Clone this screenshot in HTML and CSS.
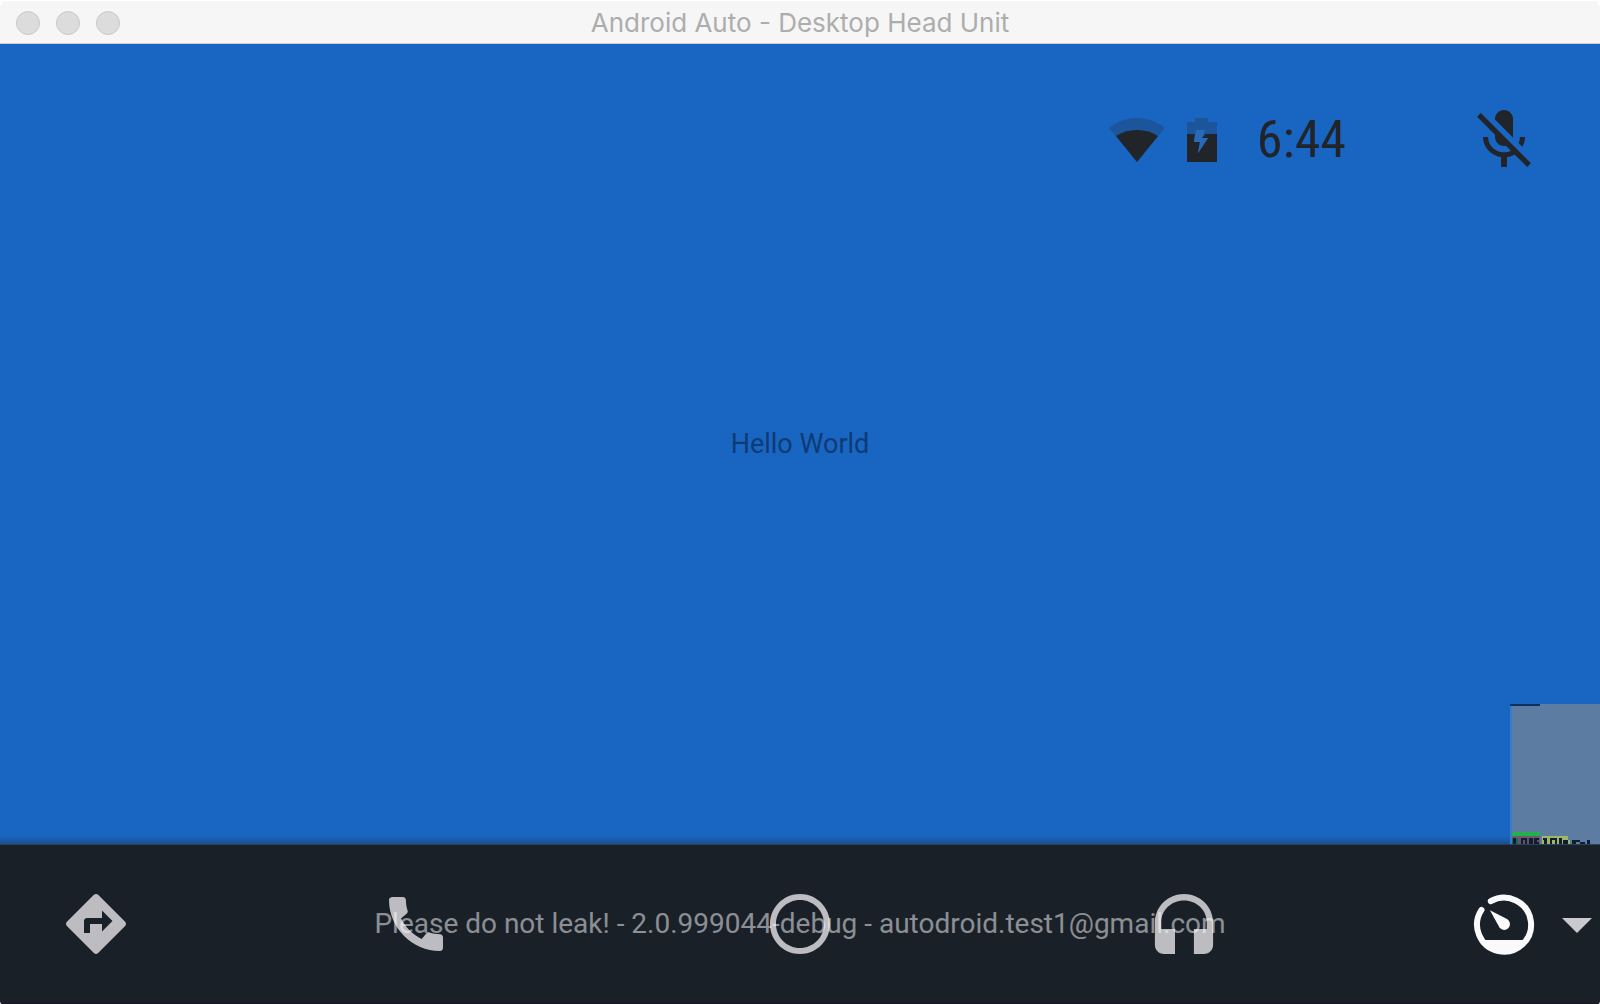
FILE: index.html
```html
<!DOCTYPE html>
<html lang="en">
<head>
<meta charset="utf-8">
<meta name="viewport" content="width=device-width, initial-scale=1">
<title>Android Auto - Desktop Head Unit</title>
<link rel="stylesheet" href="styles.css">
</head>
<body>
<div class="window">
  <header class="titlebar">
    <div class="lights">
      <button class="light" type="button" aria-label="Close"></button>
      <button class="light" type="button" aria-label="Minimize"></button>
      <button class="light" type="button" aria-label="Zoom"></button>
    </div>
    <h1 class="title">Android Auto - Desktop Head Unit</h1>
  </header>

  <main class="screen">
    <div class="status">
      <svg class="wifi" viewBox="0 0 56 44" aria-hidden="true">
        <path class="faint" d="M28 0C17 0 7 4 0 10L28 44 56 10C49 4 39 0 28 0z"/>
        <path d="M28 12C20 12 13 14 7 18L28 44 49 18C43 14 36 12 28 12z"/>
      </svg>
      <svg class="battery" viewBox="0 0 30 44" aria-hidden="true">
        <path class="faint" d="M8 0H21V4H30V16H0V4H8z"/>
        <path d="M0 16H8L7 24H13L11 35 21 20H15L18 16H30V44H0z"/>
        <path class="bolt" d="M9 12H18L15 20H21L11 35 13 24H7z"/>
      </svg>
      <time class="clock">6:44</time>
      <button class="mic" type="button" aria-label="Microphone off">
        <svg class="icon" viewBox="0 0 24 24" aria-hidden="true">
          <path d="M19 11h-1.700c0 .740-.160 1.430-.430 2.050l1.230 1.230c.560-.980.900-2.090.900-3.280zm-4.020.170c0-.060.020-.110.020-.170V5c0-1.660-1.340-3-3-3S9 3.340 9 5v.180l5.980 5.990zM4.270 3L3 4.270l6.010 6.010V11c0 1.660 1.330 3 2.990 3 .220 0 .440-.030.650-.080l1.660 1.660c-.710.330-1.500.520-2.310.520-2.760 0-5.300-2.100-5.300-5.100H5c0 3.410 2.720 6.230 6 6.720V21h2v-3.280c.910-.130 1.770-.450 2.540-.900L19.730 21 21 19.730 4.270 3z"/>
        </svg>
      </button>
    </div>
    <p class="hello">Hello World</p>
    <div class="graph" aria-hidden="true">
      <svg class="ticks" viewBox="0 0 90 14">
        <path fill="#22b14e" d="M2 2H30V6H2z"/>
        <path fill="#6b5b6d" d="M2 6H30V8H2z"/>
        <path fill="#176b50" d="M2 8H8V14H2z"/>
        <path fill="#67516a" d="M8 8H30V14H8z"/>
        <path fill="#9db765" d="M32 6H58V10H60V14H32z"/>
        <path fill="#101c30" d="M3 8H6V14H3zM11 8H17V14H15V10H13V14H11zM19 8H23V14H19zM24 8H29V10H27V12H29V14H24zM33 8H37V14H34V10H33zM40 8H47V14H45V10H42V14H40zM49 8H52V14H49zM53 10H58V14H53zM62 10H70V12H66V14H62zM70 12H75V14H70zM77 10H80V14H77z"/>
      </svg>
    </div>
  </main>

  <nav class="nav" aria-label="Facets">
    <button class="facet side" type="button" aria-label="Navigation">
      <svg class="icon" viewBox="0 0 24 24" aria-hidden="true"><path d="M21.710 11.290l-9-9c-.390-.390-1.020-.390-1.410 0l-9 9c-.390.390-.390 1.020 0 1.410l9 9c.390.390 1.020.390 1.410 0l9-9c.390-.380.390-1.010 0-1.410zM14 14.500V12h-4v3H8v-4c0-.550.450-1 1-1h5V7.500l3.500 3.500-3.500 3.500z"/></svg>
    </button>
    <button class="facet wide" type="button" aria-label="Phone">
      <svg class="icon" viewBox="0 0 24 24" aria-hidden="true"><path d="M20.010 15.380c-1.230 0-2.420-.200-3.530-.560-.350-.120-.740-.030-1.010.240l-1.570 1.970c-2.830-1.350-5.480-3.900-6.890-6.830l1.950-1.660c.270-.280.350-.670.240-1.020-.370-1.110-.560-2.300-.560-3.530 0-.540-.450-.990-.990-.990H4.190C3.650 3 3 3.240 3 3.990 3 13.280 10.730 21 20.010 21c.710 0 .990-.630.990-1.180v-3.450c0-.540-.450-.990-.990-.990z"/></svg>
    </button>
    <button class="facet mid" type="button" aria-label="Home">
      <svg class="icon" viewBox="0 0 24 24" aria-hidden="true"><path d="M12 2C6.480 2 2 6.480 2 12s4.480 10 10 10 10-4.480 10-10S17.520 2 12 2zm0 18c-4.420 0-8-3.580-8-8s3.580-8 8-8 8 3.580 8 8-3.580 8-8 8z"/></svg>
    </button>
    <button class="facet wide" type="button" aria-label="Media">
      <svg class="icon" viewBox="0 0 24 24" aria-hidden="true"><path d="M12 2C6.700 2 2.300 6.200 2.300 11.500V19c0 1.660 1.340 3 3 3H9v-8.300H4.400V11.500C4.400 7.400 7.800 4.200 12 4.200s7.600 3.200 7.600 7.300v2.200H15.300V22h3.400c1.660 0 3-1.340 3-3v-7.500C21.700 6.200 17.300 2 12 2z"/></svg>
    </button>
    <button class="facet side active" type="button" aria-label="Car">
      <svg class="icon" viewBox="0 0 24 24" aria-hidden="true">
        <path class="ring" d="M7.600 4.400A9 9 0 1 1 4.500 7.300"/>
        <path d="M4.800 17.300H19.200C17.500 20 14.900 22 12 22S6.500 20 4.800 17.300z"/>
        <path d="M7.300 7.400L13 10.300C14 11 14.300 12.200 13.600 13.200S11.400 14.300 10.500 13.200z"/>
      </svg>
      <svg class="caret" viewBox="0 0 30 15" aria-hidden="true"><path d="M0 0H30L15 15z"/></svg>
    </button>
    <p class="notice">Please do not leak! - 2.0.999044-debug - autodroid.test1@gmail.com</p>
  </nav>
</div>
</body>
</html>
```

FILE: styles.css
```css
* {
  box-sizing: border-box;
}

body {
  margin: 0;
  background: #fff;
  font-family: Roboto, "Liberation Sans", sans-serif;
}

h1,
p {
  margin: 0;
  font-weight: 400;
}

button {
  padding: 0;
  border: 0;
  background: none;
}

svg {
  display: block;
  fill: currentColor;
}

.window {
  display: flex;
  flex-direction: column;
  min-height: 100vh;
  overflow: hidden;
  border-radius: 8px 8px 3px 3px;
}

.titlebar {
  display: grid;
  grid-template-columns: 1fr auto 1fr;
  align-items: center;
  height: 44px;
  padding: 1px 16px 0;
  border-top: 1px solid #fff;
  border-bottom: 1px solid #cfcfcf;
  background: #f6f6f6;
}

.lights {
  display: flex;
  gap: 16px;
}

.light {
  width: 24px;
  height: 24px;
  border: 1px solid #c9c9c9;
  border-radius: 50%;
  background: #dcdcdc;
}

.title {
  color: #adadad;
  font-family: Inter, "Liberation Sans", sans-serif;
  font-size: 26px;
  line-height: 32px;
}

.screen {
  position: relative;
  display: grid;
  grid-template-rows: 1fr auto 1fr;
  flex: 1;
  background: linear-gradient(to top, #1a4f8c, #1966c2 8px);
}

.status {
  display: flex;
  justify-content: flex-end;
  align-items: center;
  align-self: start;
  height: 72px;
  margin-top: 60px;
  padding-right: 60px;
  color: #212529;
}

.wifi {
  width: 56px;
  height: 44px;
  margin-right: 22px;
}

.battery {
  width: 30px;
  height: 44px;
  margin-right: 40px;
}

.faint {
  fill: #1c559c;
}

.bolt {
  fill: #276bb8;
}

.clock {
  margin-right: 122px;
  font-family: "Roboto Condensed", "Liberation Sans Narrow", Roboto, sans-serif;
  font-size: 52px;
  line-height: 72px;
}

.mic {
  color: inherit;
}

.icon {
  width: 72px;
  height: 72px;
}

.hello {
  color: #0f3a75;
  font-size: 27px;
  line-height: 32px;
  text-align: center;
}

.graph {
  position: absolute;
  right: 0;
  bottom: 0;
  display: flex;
  align-items: flex-end;
  width: 90px;
  height: 140px;
  background: linear-gradient(#102f60, #102f60) 0 0 / 30px 2px no-repeat, linear-gradient(to right, #3b79cb 2px, #5d7ca2 2px);
}

.ticks {
  width: 90px;
  height: 14px;
}

.nav {
  position: relative;
  display: flex;
  align-items: center;
  height: 160px;
  border-top: 1px solid #2c4257;
  border-bottom: 1px solid #1c1226;
  background: #1a2028;
}

.facet {
  position: relative;
  display: flex;
  justify-content: center;
  color: #bcbcc1;
}

.side {
  width: 12%;
}

.wide {
  width: 28%;
}

.mid {
  width: 20%;
}

.active {
  color: #fafafc;
}

.ring {
  fill: none;
  stroke: currentColor;
  stroke-width: 2;
  stroke-linecap: round;
}

.caret {
  position: absolute;
  top: 30px;
  right: 8px;
  width: 30px;
  height: 15px;
  color: #cacace;
}

.notice {
  position: absolute;
  inset: 0;
  color: rgba(255, 255, 255, 0.5);
  font-size: 28px;
  line-height: 158px;
  text-align: center;
  pointer-events: none;
}
```
